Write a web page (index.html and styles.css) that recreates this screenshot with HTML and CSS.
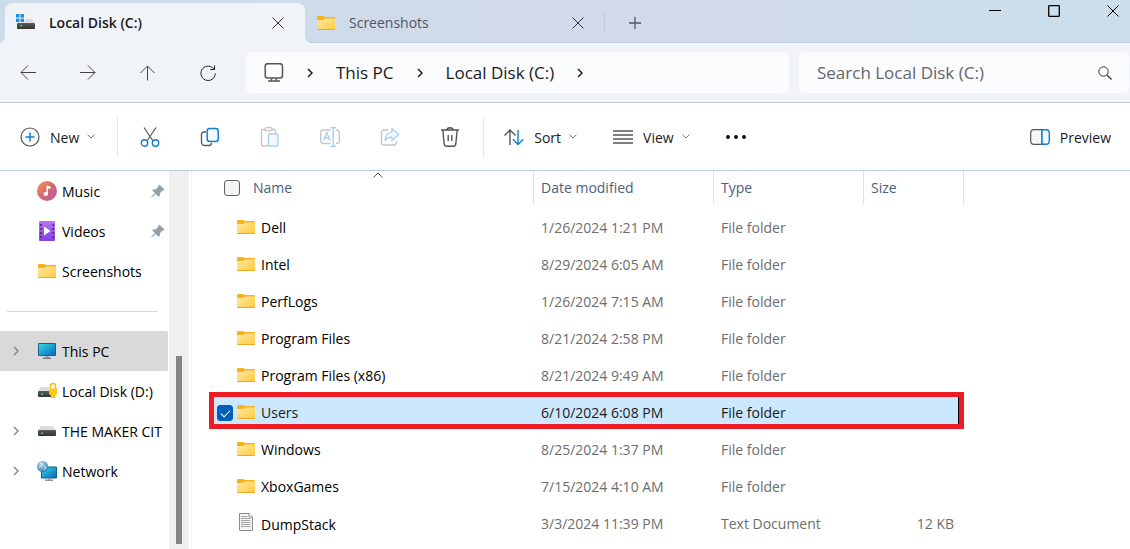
FILE: index.html
```html
<!DOCTYPE html>
<html lang="en">
<head>
    <meta charset="UTF-8">
    <meta name="viewport" content="width=device-width, initial-scale=1">
    <title>Local Disk (C:)</title>
    <link rel="stylesheet" href="styles.css">
</head>
<body>

<!-- shared icons -->
<svg class="sprite" width="0" height="0" aria-hidden="true">
    <defs>
        <linearGradient id="gFolder" x1="0" y1="0" x2="1" y2="1">
            <stop offset="0" stop-color="#ffe9a6"/>
            <stop offset="1" stop-color="#ffc93c"/>
        </linearGradient>
        <linearGradient id="gScreen" x1="0" y1="0" x2="1" y2="1">
            <stop offset="0" stop-color="#33d6e4"/>
            <stop offset="1" stop-color="#0a68bd"/>
        </linearGradient>
        <linearGradient id="gMusic" x1="0" y1="0" x2="1" y2="1">
            <stop offset="0" stop-color="#f2935a"/>
            <stop offset="0.5" stop-color="#d56a6c"/>
            <stop offset="1" stop-color="#a75bb5"/>
        </linearGradient>
        <linearGradient id="gVideo" x1="0" y1="0" x2="0" y2="1">
            <stop offset="0" stop-color="#b571f5"/>
            <stop offset="1" stop-color="#8341de"/>
        </linearGradient>
        <linearGradient id="gDrive" x1="0" y1="0" x2="0" y2="1">
            <stop offset="0" stop-color="#5a5a5a"/>
            <stop offset="1" stop-color="#333"/>
        </linearGradient>
        <radialGradient id="gGlobe" cx="0.4" cy="0.3" r="0.8">
            <stop offset="0" stop-color="#b5dcef"/>
            <stop offset="1" stop-color="#2477a5"/>
        </radialGradient>
    </defs>
    <symbol id="folder" viewBox="0 0 18 14">
        <path d="M0 1Q0 0 1 0H6L8 1H17Q18 1 18 2V8H0Z" fill="#f6b21b"/>
        <path d="M0 4H6L8 2.500H18V13Q18 14 17 14H1Q0 14 0 13Z" fill="url(#gFolder)"/>
        <path d="M0 13H18Q18 14 17 14H1Q0 14 0 13Z" fill="#e9a825"/>
    </symbol>
    <symbol id="drive" viewBox="0 0 18 10">
        <path d="M3 0H15L18 4.500H0Z" fill="#dcdcde"/>
        <rect y="4" width="18" height="6" rx="1" fill="url(#gDrive)"/>
        <rect x="3" y="6.500" width="2" height="1.500" fill="#3fdc55"/>
    </symbol>
    <symbol id="chev-down" viewBox="0 0 8 5">
        <path d="M0.500 0.500L4 4L7.500 0.500" fill="none" stroke="#777"/>
    </symbol>
    <symbol id="chev-right" viewBox="0 0 6 10">
        <path d="M1 1L5 5L1 9" fill="none" stroke="currentColor" stroke-width="1.500"/>
    </symbol>
    <symbol id="cross" viewBox="0 0 12 12">
        <path d="M0.500 0.500L11.500 11.500M11.500 0.500L0.500 11.500" fill="none" stroke="currentColor"/>
    </symbol>
    <symbol id="pin" viewBox="0 0 14 14">
        <path d="M8.500 0.500L13.500 5.500L12.500 6.700L11.500 6.500L9 9.300L8.800 12L7.500 12.700L4.700 10L1 13.500L0.300 13.500L0.500 12.600L4 9.300L1.300 6.600L2 5.400L4.800 5.200L7.500 2.600L7.400 1.500Z" fill="#95a0a8"/>
    </symbol>
    <symbol id="monitor" viewBox="0 0 18 16">
        <path d="M7.500 12H10.500V15H7.500Z" fill="#9aa5ad"/>
        <rect x="5" y="14.500" width="8" height="1.500" fill="#6f7a82"/>
        <rect x="0" y="0" width="18" height="13" rx="1" fill="#1b5f85"/>
        <rect x="1" y="1" width="16" height="11" fill="url(#gScreen)"/>
    </symbol>
</svg>

<header class="tabs">
    <div class="tab active">
        <svg class="tab-icon" width="20" height="18" viewBox="0 0 20 18" aria-hidden="true">
            <path d="M0 0h3.500v3.500H0zM4.500 0H8v3.500H4.500zM0 4.500h3.500V8H0zM4.500 4.500H8V8H4.500z" fill="#1b8fe0"/>
            <path d="M9 5H16L19 9H1V8.500H9Z" fill="#dcdcde"/>
            <rect x="1" y="9" width="18" height="6" rx="1" fill="url(#gDrive)"/>
            <rect x="4" y="11" width="2" height="1.500" fill="#3fdc55"/>
        </svg>
        <span class="tab-name">Local Disk (C:)</span>
        <button class="icon-btn" aria-label="Close tab"><svg width="12" height="12"><use href="#cross"/></svg></button>
    </div>
    <div class="tab">
        <svg class="tab-icon" width="20" height="14" aria-hidden="true"><use href="#folder"/></svg>
        <span class="tab-name">Screenshots</span>
        <button class="icon-btn" aria-label="Close tab"><svg width="12" height="12"><use href="#cross"/></svg></button>
    </div>
    <button class="icon-btn new-tab" aria-label="New tab">
        <svg width="12" height="12" viewBox="0 0 12 12"><path d="M6 0V12M0 6H12" stroke="#555" stroke-width="1.300"/></svg>
    </button>
    <div class="window-btns">
        <button class="icon-btn" aria-label="Minimize"><svg width="12" height="12" viewBox="0 0 12 12"><path d="M0 5.500H12" stroke="#000"/></svg></button>
        <button class="icon-btn" aria-label="Maximize"><svg width="12" height="12" viewBox="0 0 12 12"><rect x="0.700" y="0.700" width="10.600" height="10.600" rx="0.500" fill="none" stroke="#000" stroke-width="1.300"/></svg></button>
        <button class="icon-btn" aria-label="Close"><svg width="12" height="12"><use href="#cross"/></svg></button>
    </div>
</header>

<nav class="navbar">
    <div class="nav-btns">
        <button class="icon-btn" aria-label="Back"><svg width="16" height="16" viewBox="0 0 16 16"><path d="M16 7.500H1M8 0.500L1 7.500L8 14.500" fill="none" stroke="#444"/></svg></button>
        <button class="icon-btn" aria-label="Forward"><svg width="16" height="16" viewBox="0 0 16 16"><path d="M0 7.500H15M8 0.500L15 7.500L8 14.500" fill="none" stroke="#444"/></svg></button>
        <button class="icon-btn" aria-label="Up"><svg width="16" height="16" viewBox="0 0 16 16"><path d="M7.500 15.500V1M0.500 8L7.500 1L14.500 8" fill="none" stroke="#444"/></svg></button>
        <button class="icon-btn" aria-label="Refresh"><svg width="16" height="16" viewBox="0 0 16 16"><path d="M14.500 5A7.200 7.200 0 1 0 15.300 8.500M14.500 0.500V4.500H10.300" fill="none" stroke="#222"/></svg></button>
    </div>
    <div class="address">
        <svg class="pc" width="20" height="20" viewBox="0 0 20 20" aria-hidden="true">
            <rect x="1.200" y="0.700" width="17.300" height="14.300" rx="2.500" fill="none" stroke="#555" stroke-width="1.500"/>
            <path d="M7.500 15V18M12.200 15V18M4 18H16" fill="none" stroke="#555" stroke-width="1.400"/>
        </svg>
        <svg class="sep" width="6" height="10"><use href="#chev-right"/></svg>
        <a href="#pc">This PC</a>
        <svg class="sep" width="6" height="10"><use href="#chev-right"/></svg>
        <a href="#c">Local Disk (C:)</a>
        <svg class="sep" width="6" height="10"><use href="#chev-right"/></svg>
    </div>
    <label class="search">
        <input type="text" placeholder="Search Local Disk (C:)" aria-label="Search Local Disk (C:)">
        <svg width="14" height="14" viewBox="0 0 14 14" aria-hidden="true"><circle cx="5.500" cy="5.500" r="4.700" fill="none" stroke="#333"/><path d="M9 9L13.500 13.500" stroke="#333" stroke-width="1.200"/></svg>
    </label>
</nav>

<div class="toolbar">
    <button class="tool new">
        <svg width="20" height="20" viewBox="0 0 20 20"><circle cx="10" cy="10" r="9" fill="#fafafa" stroke="#555" stroke-width="1.200"/><path d="M10 5.500V14.500M5.500 10H14.500" stroke="#0f7fd6" stroke-width="1.500"/></svg>
        <span>New</span>
        <svg class="caret" width="8" height="5"><use href="#chev-down"/></svg>
    </button>
    <div class="tool-group">
        <button class="icon-btn" aria-label="Cut"><svg width="20" height="20" viewBox="0 0 20 20"><path d="M4 0.500L13 14M16 0.500L7 14" fill="none" stroke="#555" stroke-width="1.200"/><circle cx="4.500" cy="16" r="3.200" fill="#fff" stroke="#0f7fd6" stroke-width="1.400"/><circle cx="15.500" cy="16" r="3.200" fill="#fff" stroke="#0f7fd6" stroke-width="1.400"/></svg></button>
        <button class="icon-btn" aria-label="Copy"><svg width="20" height="20" viewBox="0 0 20 20"><path d="M6 5H4Q1.500 5 1.500 7.500V15Q1.500 18.500 5 18.500H9Q11.500 18.500 11.500 16" fill="none" stroke="#555" stroke-width="1.300"/><rect x="7.200" y="1.500" width="11" height="13" rx="2.500" fill="#f5f9fd" stroke="#0f7fd6" stroke-width="1.500"/></svg></button>
        <button class="icon-btn" aria-label="Paste"><svg width="20" height="20" viewBox="0 0 20 20"><path d="M8 19H3Q1.500 19 1.500 17.500V4Q1.500 2.500 3 2.500H5M12 2.500H14Q15.500 2.500 15.500 4V6" fill="none" stroke="#c4c4c4" stroke-width="1.300"/><rect x="5" y="0.700" width="7" height="3" rx="1.500" fill="#fff" stroke="#c4c4c4" stroke-width="1.300"/><rect x="8.500" y="7" width="9.500" height="12" rx="1.500" fill="#f5f9fd" stroke="#a5cff0" stroke-width="1.400"/></svg></button>
        <button class="icon-btn" aria-label="Rename"><svg width="20" height="20" viewBox="0 0 20 20"><path d="M10.500 3H3Q0.700 3 0.700 5.500V13.500Q0.700 16.500 3.500 16.500H10.500M16 3Q19.300 3 19.300 6V13.500Q19.300 16.500 16 16.500" fill="none" stroke="#c4c4c4" stroke-width="1.300"/><path d="M3.500 13.500L6.800 5.500L10 13.500M4.700 11H9M13.200 1V19M10.500 0.700H16M10.500 19.300H16" fill="none" stroke="#a5cff0" stroke-width="1.400"/></svg></button>
        <button class="icon-btn" aria-label="Share"><svg width="20" height="20" viewBox="0 0 20 20"><path d="M8 3H4Q1.500 3 1.500 5.500V15.500Q1.500 18 4 18H14Q16.500 18 16.500 15.500V14" fill="none" stroke="#c4c4c4" stroke-width="1.300"/><path d="M12 1.500L18.800 7.500L12 13.500V10.200Q8 10 5 13.500Q6 5 12 4.800Z" fill="#f5f9fd" stroke="#a5cff0" stroke-width="1.300" stroke-linejoin="round"/></svg></button>
        <button class="icon-btn" aria-label="Delete"><svg width="20" height="20" viewBox="0 0 20 20"><path d="M1 3H19M7 3Q7 0.700 10 0.700T13 3M2.800 3L4.200 17Q4.500 19.300 6.500 19.300H13.500Q15.500 19.300 15.800 17L17.200 3M8.200 8V14M11.800 8V14" fill="none" stroke="#555" stroke-width="1.400"/></svg></button>
    </div>
    <button class="tool sort">
        <svg width="20" height="18" viewBox="0 0 20 18"><path d="M6 17V2M0.500 7.500L6 2L11.500 7.500" fill="none" stroke="#555" stroke-width="1.400"/><path d="M14 2V16.500M8.800 11.300L14 16.500L19.300 11.300" fill="none" stroke="#0f7fd6" stroke-width="1.400"/></svg>
        <span>Sort</span>
        <svg class="caret" width="8" height="5"><use href="#chev-down"/></svg>
    </button>
    <button class="tool view">
        <svg width="20" height="14" viewBox="0 0 20 14"><path d="M0 1H20M0 5H20M0 9H20M0 13H20" stroke="#555" stroke-width="1.300"/></svg>
        <span>View</span>
        <svg class="caret" width="8" height="5"><use href="#chev-down"/></svg>
    </button>
    <button class="icon-btn more" aria-label="More"><svg width="20" height="4" viewBox="0 0 20 4"><circle cx="2" cy="2" r="1.900"/><circle cx="10" cy="2" r="1.900"/><circle cx="18" cy="2" r="1.900"/></svg></button>
    <button class="tool preview">
        <svg width="20" height="16" viewBox="0 0 20 16"><path d="M12 0.700H4Q0.700 0.700 0.700 4V12Q0.700 15.300 4 15.300H12Z" fill="#f7f7f7" stroke="#555" stroke-width="1.200"/><path d="M12 0.700H16Q19.300 0.700 19.300 4V12Q19.300 15.300 16 15.300H12Z" fill="#f1f8fe" stroke="#0f7fd6" stroke-width="1.400"/></svg>
        <span>Preview</span>
    </button>
</div>

<main class="content">
    <aside class="sidebar">
        <ul>
            <li><a href="#music">
                <svg class="icon" width="20" height="20" viewBox="0 0 20 20"><circle cx="10" cy="10" r="10" fill="url(#gMusic)"/><ellipse cx="8.800" cy="13" rx="2.300" ry="2" fill="#fff"/><path d="M9.500 13V4.500L13.500 5.500V8L11 7.400V13Z" fill="#fff"/></svg>
                <span>Music</span><svg class="pin" width="14" height="14"><use href="#pin"/></svg></a></li>
            <li><a href="#videos">
                <svg class="icon" width="20" height="20" viewBox="0 0 20 20"><rect x="2" width="16" height="20" rx="1" fill="url(#gVideo)"/><path d="M7 5.500L13.500 10L7 14.500Z" fill="#fff"/><path d="M4 3V19M16.200 3V19" stroke="#4c2691" stroke-width="1.600" stroke-dasharray="2 2"/></svg>
                <span>Videos</span><svg class="pin" width="14" height="14"><use href="#pin"/></svg></a></li>
            <li><a href="#screenshots">
                <svg class="icon" width="20" height="14"><use href="#folder"/></svg>
                <span>Screenshots</span></a></li>
        </ul>
        <hr>
        <ul>
            <li class="current"><a href="#pc">
                <svg class="arrow" width="6" height="10"><use href="#chev-right"/></svg>
                <svg class="icon" width="20" height="16"><use href="#monitor"/></svg>
                <span>This PC</span></a></li>
            <li><a href="#d">
                <svg class="icon" width="20" height="18" viewBox="0 0 20 18"><path d="M4 5H12V9H1Z" fill="#dcdcde"/><rect x="1" y="9" width="14" height="6" rx="1" fill="url(#gDrive)"/><rect x="4" y="11.500" width="2" height="1.500" fill="#3fdc55"/><path d="M13.500 7V4Q13.500 1.500 16 1.500T18.500 4V7" fill="none" stroke="#f3c21a" stroke-width="1.600"/><path d="M12 7.500Q12 6.500 13 6.500H19Q20 6.500 20 7.500V12L18 13.500V16H14V13.500L12 12Z" fill="#fbc912"/></svg>
                <span>Local Disk (D:)</span></a></li>
            <li><a href="#usb">
                <svg class="arrow" width="6" height="10"><use href="#chev-right"/></svg>
                <svg class="icon" width="20" height="10"><use href="#drive"/></svg>
                <span>THE MAKER CIT</span></a></li>
            <li><a href="#network">
                <svg class="arrow" width="6" height="10"><use href="#chev-right"/></svg>
                <svg class="icon" width="20" height="20" viewBox="0 0 20 20"><rect x="4" y="5.500" width="16" height="12" rx="1" fill="#1b5f85"/><rect x="5" y="6.500" width="14" height="10" fill="url(#gScreen)"/><path d="M8 19.300H16M12 17V19" stroke="#8a959d" stroke-width="1.400"/><circle cx="5.500" cy="5.500" r="5.500" fill="url(#gGlobe)"/><path d="M3 2Q6 2 5 4T2 6M7 5Q9 5 9 7L7 9" fill="none" stroke="#dff0f8" stroke-width="1"/></svg>
                <span>Network</span></a></li>
        </ul>
    </aside>
    <div class="scrollbar"><div class="thumb"></div></div>
    <section class="files">
        <table>
            <colgroup>
                <col class="col-check"><col class="col-name"><col class="col-date"><col class="col-type"><col class="col-size">
            </colgroup>
            <thead>
                <tr>
                    <th colspan="2" class="th-name">
                        <label><input type="checkbox">Name</label>
                        <svg class="sort-mark" width="10" height="6" viewBox="0 0 10 6" aria-hidden="true"><path d="M0.500 5.500L5 1L9.500 5.500" fill="none" stroke="#555"/></svg>
                    </th>
                    <th>Date modified</th>
                    <th>Type</th>
                    <th>Size</th>
                </tr>
            </thead>
            <tbody>
                <tr><td></td><td class="name"><svg width="18" height="14"><use href="#folder"/></svg>Dell</td><td>1/26/2024 1:21 PM</td><td>File folder</td><td></td></tr>
                <tr><td></td><td class="name"><svg width="18" height="14"><use href="#folder"/></svg>Intel</td><td>8/29/2024 6:05 AM</td><td>File folder</td><td></td></tr>
                <tr><td></td><td class="name"><svg width="18" height="14"><use href="#folder"/></svg>PerfLogs</td><td>1/26/2024 7:15 AM</td><td>File folder</td><td></td></tr>
                <tr><td></td><td class="name"><svg width="18" height="14"><use href="#folder"/></svg>Program Files</td><td>8/21/2024 2:58 PM</td><td>File folder</td><td></td></tr>
                <tr><td></td><td class="name"><svg width="18" height="14"><use href="#folder"/></svg>Program Files (x86)</td><td>8/21/2024 9:49 AM</td><td>File folder</td><td></td></tr>
                <tr class="selected"><td><input type="checkbox" checked aria-label="Users"><div class="marker"></div></td><td class="name"><svg width="18" height="14"><use href="#folder"/></svg>Users</td><td>6/10/2024 6:08 PM</td><td>File folder</td><td></td></tr>
                <tr><td></td><td class="name"><svg width="18" height="14"><use href="#folder"/></svg>Windows</td><td>8/25/2024 1:37 PM</td><td>File folder</td><td></td></tr>
                <tr><td></td><td class="name"><svg width="18" height="14"><use href="#folder"/></svg>XboxGames</td><td>7/15/2024 4:10 AM</td><td>File folder</td><td></td></tr>
                <tr><td></td><td class="name"><svg width="18" height="18" viewBox="0 0 18 18"><path d="M2.500 0.500H12L15.500 4V17.500H2.500Z" fill="#f4f4f4" stroke="#8a8a8a"/><path d="M12 0.500V4H15.500" fill="#fff" stroke="#8a8a8a"/><path d="M4 3.500H10.500M4 5.500H13.500M4 7.500H13.500M4 9.500H13.500M4 11.500H13.500M4 13.500H13.500" stroke="#a3a3a3"/></svg>DumpStack</td><td>3/3/2024 11:39 PM</td><td>Text Document</td><td class="size">12 KB</td></tr>
            </tbody>
        </table>
    </section>
</main>

</body>
</html>
```
FILE: styles.css
```css
* {
    box-sizing: border-box;
}
body {
    display: flex;
    flex-direction: column;
    height: 100vh;
    margin: 0;
    overflow: hidden;
    background: #fff;
    color: #1a1a1a;
    font-family: "Open Sans", "Segoe UI", sans-serif;
    font-size: 14px;
    line-height: 20px;
}
button {
    padding: 0;
    border: none;
    background: none;
    color: inherit;
    font: inherit;
}
a {
    color: inherit;
    text-decoration: none;
}
svg {
    display: block;
    flex: none;
}
.sprite {
    position: absolute;
}
.icon-btn {
    display: flex;
    align-items: center;
    justify-content: center;
}

/* tabs */
.tabs {
    display: flex;
    flex: none;
    height: 43px;
    padding: 3px 11px 0 5px;
    border-bottom: 1px solid #bccbdc;
    background: linear-gradient(90deg, #ccdcea, #d2daea 65%, #ccdeeb 88%);
}
.tab {
    position: relative;
    display: flex;
    align-items: center;
    width: 300px;
    padding: 0 21px 0 11px;
    color: #50565e;
}
.tab.active {
    margin-bottom: -1px;
    border-radius: 8px 8px 0 0;
    background: #f0f4f9;
    color: #1a1a1a;
    font-weight: 600;
}
.tab.active::before,
.tab.active::after {
    content: "";
    position: absolute;
    bottom: 0;
    width: 5px;
    height: 5px;
}
.tab.active::before {
    left: -5px;
    background: radial-gradient(circle at 0 0, transparent 4px, #f0f4f9 5px);
}
.tab.active::after {
    right: -5px;
    background: radial-gradient(circle at 100% 0, transparent 4px, #f0f4f9 5px);
}
.tab-icon {
    margin-right: 13px;
}
.tab-name {
    flex: 1;
}
.tab .icon-btn {
    color: #333;
}
.new-tab {
    width: 60px;
    margin: 10px 0 9px -1px;
    border-left: 1px solid #bfcbdc;
}
.window-btns {
    display: flex;
    align-items: flex-start;
    gap: 47px;
    margin-left: auto;
    padding-top: 2px;
    color: #000;
}

/* navigation */
.navbar {
    display: flex;
    flex: none;
    gap: 10px;
    height: 60px;
    padding: 9px 1px 9px 0;
    border-bottom: 1px solid #bccbdc;
    background: #f0f4f9;
}
.nav-btns {
    display: flex;
    gap: 44px;
    padding: 0 20px;
}
.address {
    display: flex;
    flex: 1;
    align-items: center;
    gap: 23px;
    padding-left: 18px;
    border-radius: 6px;
    background: #fbfcfe;
    font-size: 17px;
}
.search {
    display: flex;
    align-items: center;
    width: 330px;
    padding: 0 17px 0 18px;
    border-radius: 6px;
    background: #fbfcfe;
}
.search input {
    flex: 1;
    min-width: 0;
    padding: 0;
    border: none;
    outline: none;
    background: none;
    font: inherit;
    font-size: 17px;
}
.search input::placeholder {
    color: #62666b;
    opacity: 1;
}

/* toolbar */
.toolbar {
    display: flex;
    flex: none;
    align-items: center;
    height: 68px;
    padding: 0 19px 0 20px;
    border-bottom: 1px solid #bccbdc;
}
.tool {
    display: flex;
    align-items: center;
    gap: 10px;
}
.tool span,
.sidebar span {
    padding-top: 2px;
}
.caret {
    margin-left: -2px;
}
.tool-group {
    display: flex;
    gap: 40px;
    height: 40px;
    margin: 0 20px 0 22px;
    padding: 0 23px 0 22px;
    border: 1px solid #e8e8e8;
    border-width: 0 1px;
}
.view {
    margin-left: 36px;
}
.more {
    margin-left: 36px;
}
.preview {
    margin-left: auto;
}

/* sidebar */
.content {
    display: flex;
    flex: 1;
    min-height: 0;
}
.sidebar {
    width: 169px;
    overflow: hidden;
    color: #000;
}
.sidebar ul {
    margin: 0;
    padding: 0;
    list-style: none;
}
.sidebar li a {
    display: flex;
    align-items: center;
    height: 40px;
    margin-right: 1px;
    padding-left: 37px;
    white-space: nowrap;
}
.sidebar .current a {
    border-radius: 0 2px 2px 0;
    background: #d9d9d9;
}
.icon {
    margin-right: 5px;
}
.arrow {
    margin-left: -24px;
    margin-right: 18px;
    color: #888;
}
.pin {
    margin-left: auto;
    margin-right: 3px;
}
.sidebar hr {
    margin: 20px 11px 19px 7px;
    border: none;
    border-top: 1px solid #d3d6d6;
}
.scrollbar {
    display: flex;
    align-items: flex-end;
    justify-content: center;
    width: 20px;
    padding-bottom: 5px;
    background: #f0f0f0;
}
.thumb {
    width: 6px;
    height: 188px;
    background: #858585;
}

/* file list */
.files {
    flex: 1;
    margin-left: 2px;
    padding-left: 17px;
    border-left: 1px solid #f5f5f5;
}
table {
    width: 755px;
    border-collapse: separate;
    border-spacing: 0;
    table-layout: fixed;
}
.col-check {
    width: 28px;
}
.col-name {
    width: 296px;
}
.col-date {
    width: 180px;
}
.col-type {
    width: 150px;
}
th {
    height: 33px;
    padding: 0 7px;
    border-left: 1px solid #e2e2e2;
    color: #4c607a;
    font-weight: 400;
    text-align: left;
}
th:last-child {
    border-right: 1px solid #e2e2e2;
}
.th-name {
    position: relative;
    padding-left: 15px;
    border-left: none;
}
.th-name label {
    display: flex;
    align-items: center;
    gap: 13px;
}
.sort-mark {
    position: absolute;
    top: 1px;
    left: 50%;
    margin-left: 2px;
}
tbody::before {
    content: "";
    display: block;
    height: 5px;
}
td {
    height: 37px;
    padding: 0 8px;
    color: #6d6d6d;
    white-space: nowrap;
}
.name {
    padding: 0;
    color: #000;
}
.name svg {
    display: inline-block;
    margin-right: 6px;
    vertical-align: -1px;
}
.size {
    padding-right: 10px;
    text-align: right;
}
input[type="checkbox"] {
    display: block;
    width: 16px;
    height: 16px;
    margin: 0;
    border: 1px solid #606060;
    border-radius: 3px;
    background: #f5f5f5;
    appearance: none;
}
input[type="checkbox"]:checked {
    border-color: #005fb8;
    background: #005fb8;
}
input[type="checkbox"]:checked::after {
    content: "";
    display: block;
    width: 8px;
    height: 4px;
    margin: 4px 3px;
    border: solid #fff;
    border-width: 0 0 1px 1px;
    transform: rotate(-45deg);
}
.selected {
    position: relative;
}
.selected td {
    color: #1a1a1a;
}
/* red frame round the chosen folder */
.marker {
    position: absolute;
    z-index: -1;
    top: -2px;
    right: 0;
    left: 0;
    height: 37px;
    border: 5px solid #ee1c25;
    background: #cce8ff;
    box-shadow: inset -1px 0 #000;
}
```
